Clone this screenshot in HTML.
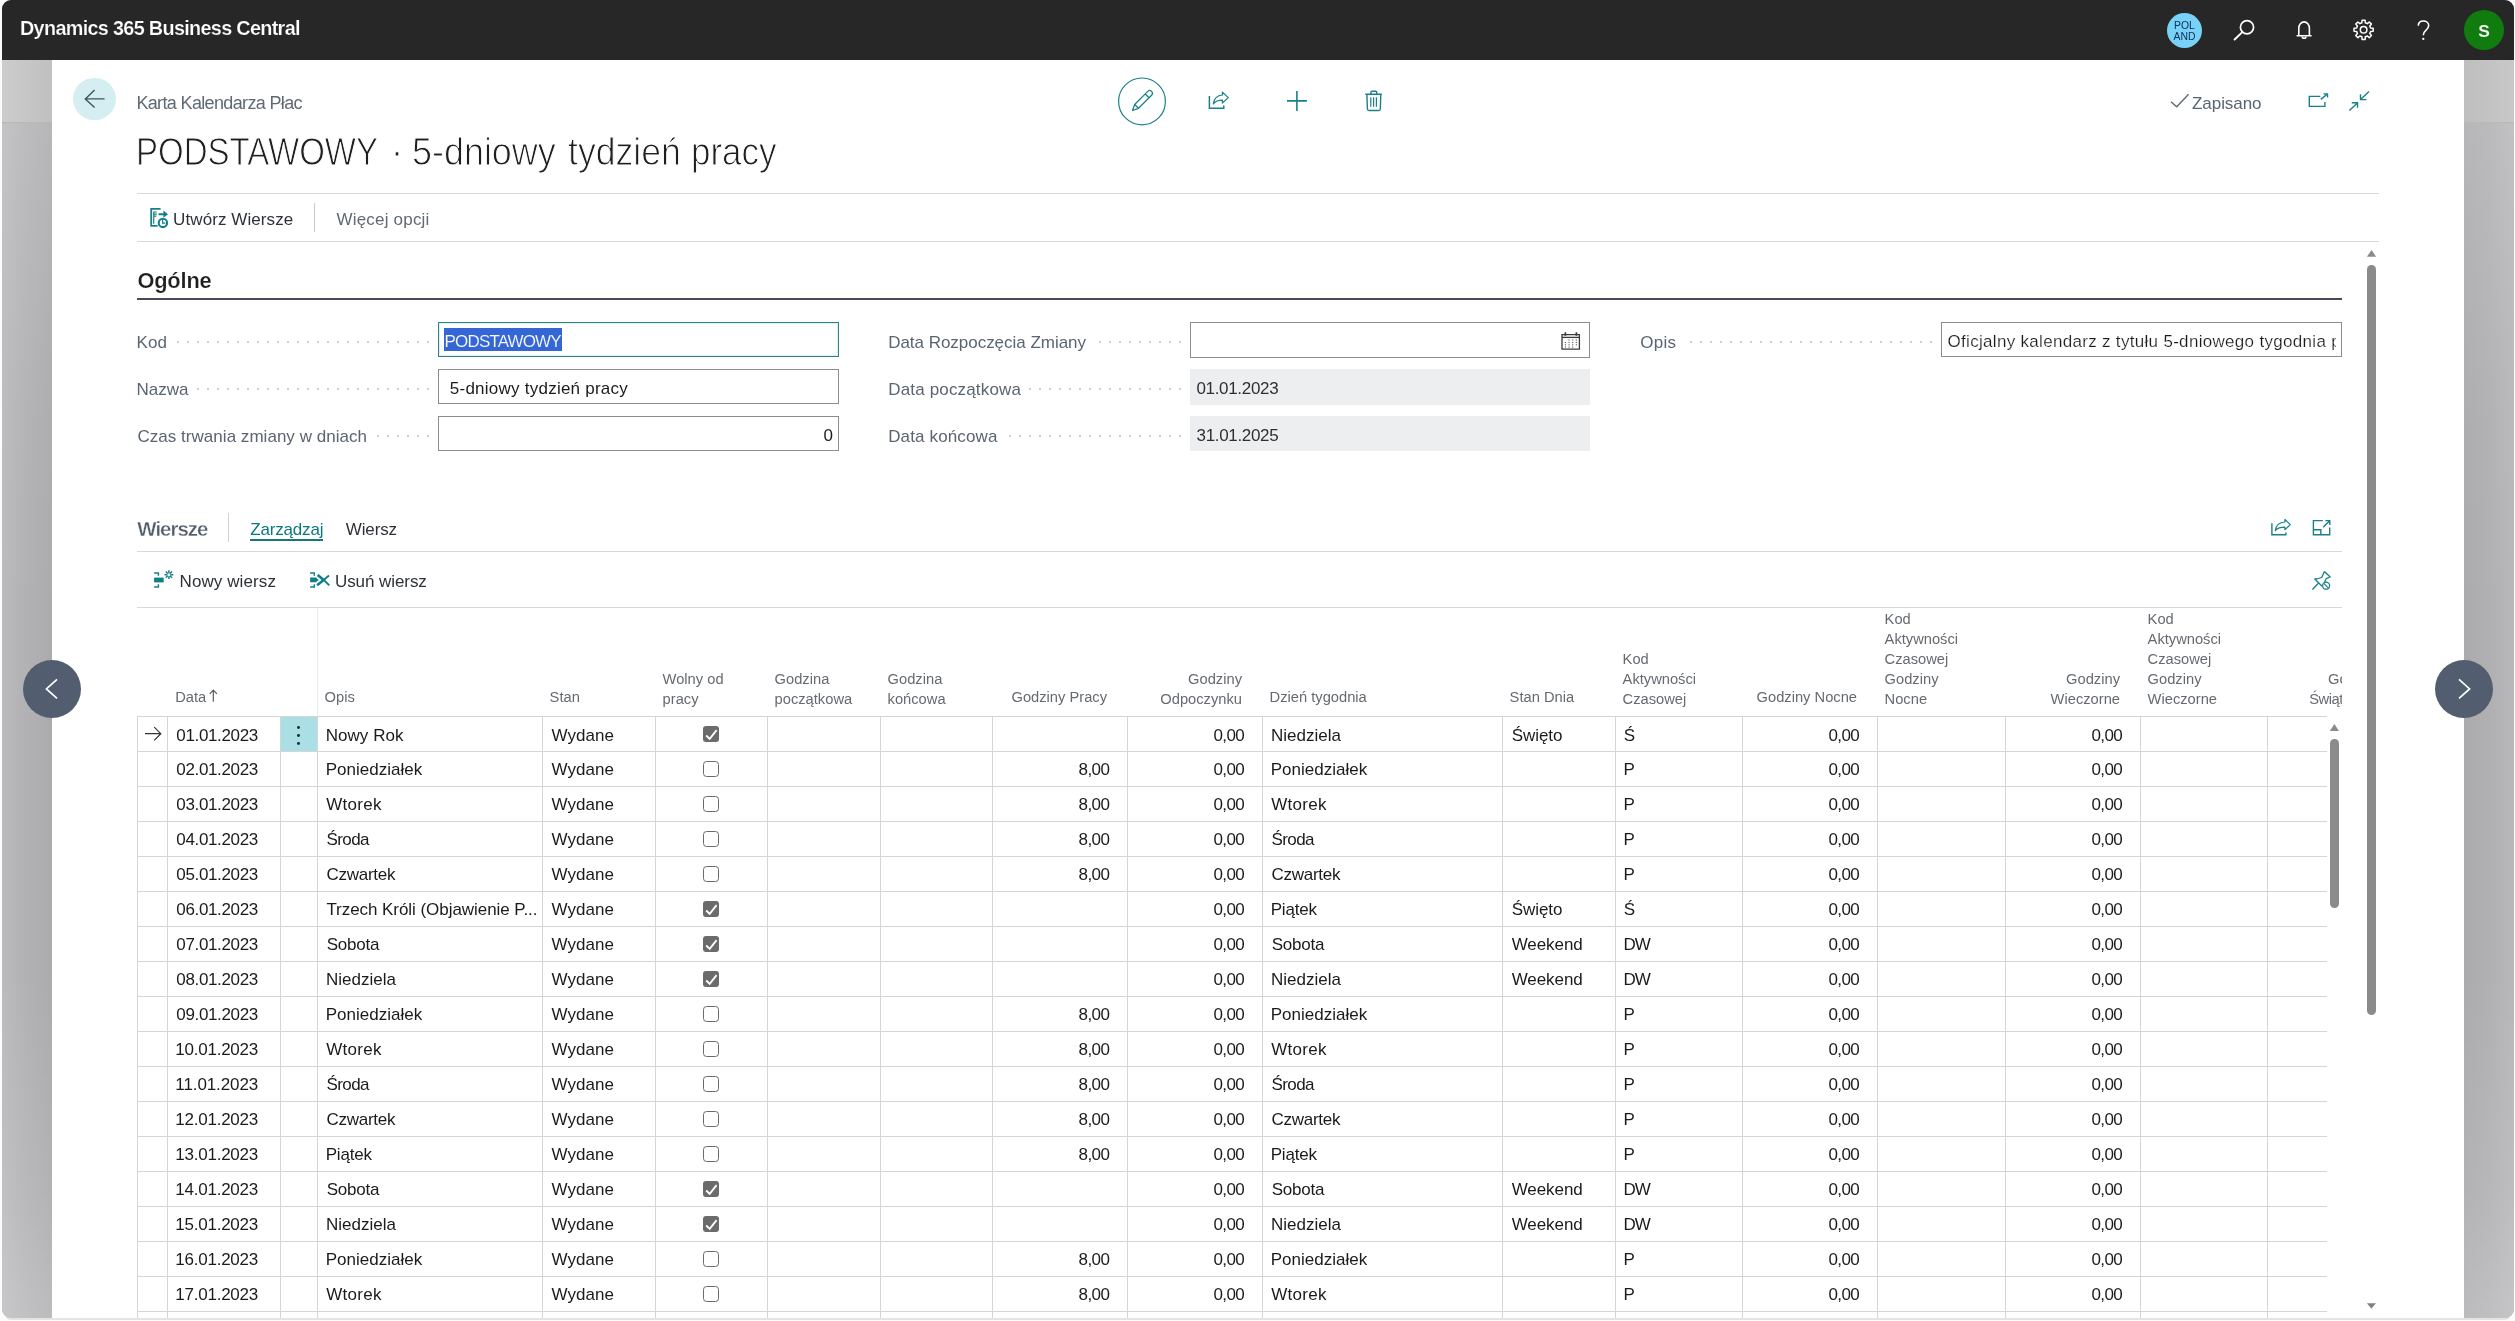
<!DOCTYPE html>
<html lang="pl"><head><meta charset="utf-8"><title>Karta Kalendarza Płac</title>
<style>
html,body{margin:0;padding:0;}
body{width:2515px;height:1321px;overflow:hidden;background:#fcfcfc;font-family:"Liberation Sans",sans-serif;position:relative;}
.t{position:absolute;white-space:nowrap;line-height:1;}
.b{position:absolute;box-sizing:border-box;}
svg{position:absolute;overflow:visible;}
#win{position:absolute;left:2px;top:0;width:2512px;height:1318px;border-radius:9px;overflow:hidden;background:#b4b4b6;}
#abs{will-change:transform;position:absolute;left:-2px;top:0;width:2515px;height:1321px;}
.dots{position:absolute;height:2px;background-image:linear-gradient(90deg,#cbced2 2px,rgba(255,255,255,0) 2px);background-size:10px 2px;background-repeat:repeat-x;}
.hl{position:absolute;height:1px;background:#d8d8d8;}
</style></head><body>
<div class="b" style="left:5px;top:1314px;width:2506px;height:5.5px;background:#e4e4e4;border-radius:0 0 9px 9px;"></div>
<div id="win"><div id="abs">

<div class="b" style="left:2px;top:60px;width:50px;height:1260px;background:linear-gradient(180deg,rgba(255,255,255,.16) 0%,rgba(255,255,255,.12) 8%,rgba(255,255,255,.03) 28%,rgba(255,255,255,0) 45%,rgba(255,255,255,0) 72%,rgba(255,255,255,.09) 90%,rgba(255,255,255,.20) 100%),linear-gradient(90deg,#bbbbbd 0%,#b3b3b5 40%,#ababad 100%);"></div>
<div class="b" style="left:2px;top:60px;width:50px;height:63px;background:linear-gradient(90deg,#cccccd 0%,#c6c6c7 50%,#c0c0c1 100%);border-bottom:1px solid #b8b8ba;"></div>
<div class="b" style="left:2464px;top:60px;width:51px;height:1260px;background:linear-gradient(180deg,rgba(255,255,255,.16) 0%,rgba(255,255,255,.12) 8%,rgba(255,255,255,.03) 28%,rgba(255,255,255,0) 45%,rgba(255,255,255,0) 72%,rgba(255,255,255,.09) 90%,rgba(255,255,255,.20) 100%),linear-gradient(90deg,#ababad 0%,#b1b1b3 55%,#b8b8ba 100%);"></div>
<div class="b" style="left:2464px;top:60px;width:51px;height:63px;background:linear-gradient(90deg,#bebebf 0%,#c3c3c4 50%,#c8c8c9 100%);border-bottom:1px solid #b8b8ba;"></div>
<div class="b" style="left:52px;top:60px;width:2412px;height:1262px;background:#fff;"></div>
<div class="b" style="left:0px;top:0px;width:2515px;height:60px;background:#272727;"></div>
<div class="t" style="top:19.00px;font-size:19.8px;color:#fff;-webkit-text-stroke:0.2px #272727;font-weight:bold;letter-spacing:-0.663px;left:20.00px;">Dynamics 365 Business Central</div>
<div class="b" style="left:2166.7px;top:12.6px;width:35.5px;height:35.5px;background:#78d2f7;border-radius:50%;"></div>
<div class="t" style="top:21.00px;font-size:10.4px;color:#0d2c54;left:0.00px;left:2166.7px;width:35.5px;text-align:center;">POL</div>
<div class="t" style="top:32.00px;font-size:10.4px;color:#0d2c54;left:0.00px;left:2166.7px;width:35.5px;text-align:center;">AND</div>
<div class="b" style="left:2464px;top:10px;width:40px;height:40px;background:#107c10;border-radius:50%;"></div>
<div class="t" style="top:23.00px;font-size:17.4px;color:#fff;-webkit-text-stroke:0.12px #107c10;font-weight:bold;left:0.00px;left:2464px;width:40px;text-align:center;">S</div>
<div class="b" style="left:73.2px;top:77.6px;width:42.6px;height:42.6px;background:#d4eef1;border-radius:50%;"></div>
<div class="t" style="top:94.00px;font-size:18.0px;color:#5f6a75;letter-spacing:-0.645px;left:136.40px;">Karta Kalendarza Płac</div>
<div class="t" style="top:132.00px;font-size:39.2px;color:#1f1f1f;left:136.47px;transform:scaleX(0.8423);transform-origin:0 0;-webkit-text-stroke:1.0px #fff;">PODSTAWOWY</div>
<div class="t" style="top:132.00px;font-size:39.2px;color:#1f1f1f;left:390.60px;transform:scaleX(1.0000);transform-origin:0 0;-webkit-text-stroke:1.0px #fff;">·</div>
<div class="t" style="top:132.00px;font-size:39.2px;color:#1f1f1f;left:411.78px;transform:scaleX(0.9166);transform-origin:0 0;-webkit-text-stroke:1.0px #fff;">5-dniowy</div>
<div class="t" style="top:132.00px;font-size:39.2px;color:#1f1f1f;left:568.10px;transform:scaleX(0.9087);transform-origin:0 0;-webkit-text-stroke:1.0px #fff;">tydzień</div>
<div class="t" style="top:132.00px;font-size:39.2px;color:#1f1f1f;left:690.52px;transform:scaleX(0.8925);transform-origin:0 0;-webkit-text-stroke:1.0px #fff;">pracy</div>
<div class="t" style="top:95.00px;font-size:17.0px;color:#5a6570;letter-spacing:-0.054px;left:2192.00px;">Zapisano</div>
<div class="hl" style="left:137px;top:193px;width:2242px;"></div>
<div class="hl" style="left:137px;top:241px;width:2242px;"></div>
<div class="t" style="top:211.00px;font-size:17.0px;color:#2e3238;letter-spacing:0.088px;left:173.10px;">Utwórz Wiersze</div>
<div class="b" style="left:314px;top:203px;width:1px;height:29px;background:#c9c9c9;"></div>
<div class="t" style="top:211.00px;font-size:17.0px;color:#5f6a75;letter-spacing:0.208px;left:336.40px;">Więcej opcji</div>
<div class="t" style="top:270.00px;font-size:21.8px;color:#1f1f1f;-webkit-text-stroke:0.2px #fff;font-weight:bold;letter-spacing:-0.151px;left:137.40px;">Ogólne</div>
<div class="b" style="left:137px;top:298px;width:2205px;height:2px;background:#474b5c;"></div>
<div class="t" style="top:334.00px;font-size:17.0px;color:#5b6572;letter-spacing:0.103px;left:136.50px;">Kod</div>
<div class="dots" style="left:177px;top:341px;width:252px;"></div>
<div class="t" style="top:381.00px;font-size:17.0px;color:#5b6572;letter-spacing:-0.002px;left:136.50px;">Nazwa</div>
<div class="dots" style="left:197px;top:388px;width:232px;"></div>
<div class="t" style="top:428.00px;font-size:17.0px;color:#5b6572;letter-spacing:0.03px;left:137.50px;">Czas trwania zmiany w dniach</div>
<div class="dots" style="left:377px;top:435px;width:52px;"></div>
<div class="t" style="top:334.00px;font-size:17.0px;color:#5b6572;letter-spacing:-0.028px;left:888.20px;">Data Rozpoczęcia Zmiany</div>
<div class="dots" style="left:1099px;top:341px;width:82px;"></div>
<div class="t" style="top:381.00px;font-size:17.0px;color:#5b6572;letter-spacing:0.168px;left:888.20px;">Data początkowa</div>
<div class="dots" style="left:1029px;top:388px;width:152px;"></div>
<div class="t" style="top:428.00px;font-size:17.0px;color:#5b6572;letter-spacing:0.139px;left:888.20px;">Data końcowa</div>
<div class="dots" style="left:1009px;top:435px;width:172px;"></div>
<div class="t" style="top:334.00px;font-size:17.0px;color:#5b6572;letter-spacing:0.282px;left:1640.20px;">Opis</div>
<div class="dots" style="left:1690px;top:341px;width:242px;"></div>
<div class="b" style="left:438px;top:322px;width:401px;height:35px;border:1.2px solid #2f8286;background:#fff;box-shadow:inset 0 0 0 1px #d8f1f2;"></div>
<div class="b" style="left:444px;top:328px;width:118px;height:23px;background:#3466d6;"></div>
<div class="t" style="top:333.00px;font-size:17.0px;color:#fff;-webkit-text-stroke:0.15px #3466d6;letter-spacing:-0.847px;left:444.60px;">PODSTAWOWY</div>
<div class="b" style="left:438px;top:369px;width:401px;height:35px;border:1px solid #8c8c8c;background:#fff;"></div>
<div class="t" style="top:380.00px;font-size:17.0px;color:#1b1b1b;letter-spacing:0.242px;left:449.80px;">5-dniowy tydzień pracy</div>
<div class="b" style="left:438px;top:416px;width:401px;height:35px;border:1px solid #8c8c8c;background:#fff;"></div>
<div class="t" style="top:427.00px;font-size:17.0px;color:#1b1b1b;right:1682.00px;">0</div>
<div class="b" style="left:1190px;top:322px;width:400px;height:36px;border:1px solid #8c8c8c;background:#fff;"></div>
<div class="b" style="left:1190px;top:369px;width:400px;height:35.5px;background:#eceef0;"></div>
<div class="t" style="top:380.00px;font-size:17.0px;color:#303030;letter-spacing:-0.314px;left:1196.40px;">01.01.2023</div>
<div class="b" style="left:1190px;top:416px;width:400px;height:35px;background:#eceef0;"></div>
<div class="t" style="top:427.00px;font-size:17.0px;color:#303030;letter-spacing:-0.336px;left:1196.60px;">31.01.2025</div>
<div class="b" style="left:1941px;top:322px;width:401px;height:35px;border:1px solid #8c8c8c;background:#fff;"></div>
<div class="b" style="left:1942px;top:323px;width:393.7px;height:33px;overflow:hidden;"><div class="t" style="left:5.50px;top:10.00px;font-size:17px;letter-spacing:0.309px;color:#1b1b1b;-webkit-text-stroke:0.2px #fff;">Oficjalny kalendarz z tytułu 5-dniowego tygodnia pracy</div></div>
<div class="t" style="top:519.00px;font-size:20.4px;color:#535e6d;-webkit-text-stroke:0.33px #fff;font-weight:bold;letter-spacing:-0.974px;left:137.30px;">Wiersze</div>
<div class="b" style="left:228px;top:513px;width:1px;height:29px;background:#d2d2d2;"></div>
<div class="t" style="top:521.00px;font-size:17.0px;color:#0a787f;letter-spacing:-0.183px;left:250.30px;">Zarządzaj</div>
<div class="b" style="left:250px;top:538.5px;width:73px;height:2px;background:#16787e;"></div>
<div class="t" style="top:521.00px;font-size:17.0px;color:#2e3238;letter-spacing:-0.128px;left:345.80px;">Wiersz</div>
<div class="hl" style="left:137px;top:551px;width:2205px;"></div>
<div class="t" style="top:573.00px;font-size:17.0px;color:#2e3238;letter-spacing:0.1px;left:179.50px;">Nowy wiersz</div>
<div class="t" style="top:573.00px;font-size:17.0px;color:#2e3238;letter-spacing:-0.078px;left:335.00px;">Usuń wiersz</div>
<div class="hl" style="left:137px;top:607px;width:2205px;"></div>
<div class="b" style="left:137px;top:608px;width:2205px;height:712px;overflow:hidden;"><div class="b" style="left:-137px;top:-608px;width:2515px;height:1321px;">
<div class="t" style="top:690.00px;font-size:14.7px;color:#666a70;left:175.20px;">Data</div>
<div class="t" style="top:690.00px;font-size:14.7px;color:#666a70;left:324.60px;">Opis</div>
<div class="t" style="top:690.00px;font-size:14.7px;color:#666a70;left:549.60px;">Stan</div>
<div class="t" style="top:672.00px;font-size:14.7px;color:#666a70;left:662.60px;">Wolny od</div>
<div class="t" style="top:692.00px;font-size:14.7px;color:#666a70;left:662.60px;">pracy</div>
<div class="t" style="top:672.00px;font-size:14.7px;color:#666a70;left:774.60px;">Godzina</div>
<div class="t" style="top:692.00px;font-size:14.7px;color:#666a70;left:774.60px;">początkowa</div>
<div class="t" style="top:672.00px;font-size:14.7px;color:#666a70;left:887.60px;">Godzina</div>
<div class="t" style="top:692.00px;font-size:14.7px;color:#666a70;left:887.60px;">końcowa</div>
<div class="t" style="top:690.00px;font-size:14.7px;color:#666a70;right:1408.00px;">Godziny Pracy</div>
<div class="t" style="top:672.00px;font-size:14.7px;color:#666a70;right:1273.00px;">Godziny</div>
<div class="t" style="top:692.00px;font-size:14.7px;color:#666a70;right:1273.00px;">Odpoczynku</div>
<div class="t" style="top:690.00px;font-size:14.7px;color:#666a70;left:1269.60px;">Dzień tygodnia</div>
<div class="t" style="top:690.00px;font-size:14.7px;color:#666a70;left:1509.60px;">Stan Dnia</div>
<div class="t" style="top:652.00px;font-size:14.7px;color:#666a70;left:1622.60px;">Kod</div>
<div class="t" style="top:672.00px;font-size:14.7px;color:#666a70;left:1622.60px;">Aktywności</div>
<div class="t" style="top:692.00px;font-size:14.7px;color:#666a70;left:1622.60px;">Czasowej</div>
<div class="t" style="top:690.00px;font-size:14.7px;color:#666a70;right:658.00px;">Godziny Nocne</div>
<div class="t" style="top:612.00px;font-size:14.7px;color:#666a70;left:1884.60px;">Kod</div>
<div class="t" style="top:632.00px;font-size:14.7px;color:#666a70;left:1884.60px;">Aktywności</div>
<div class="t" style="top:652.00px;font-size:14.7px;color:#666a70;left:1884.60px;">Czasowej</div>
<div class="t" style="top:672.00px;font-size:14.7px;color:#666a70;left:1884.60px;">Godziny</div>
<div class="t" style="top:692.00px;font-size:14.7px;color:#666a70;left:1884.60px;">Nocne</div>
<div class="t" style="top:672.00px;font-size:14.7px;color:#666a70;right:395.00px;">Godziny</div>
<div class="t" style="top:692.00px;font-size:14.7px;color:#666a70;right:395.00px;">Wieczorne</div>
<div class="t" style="top:612.00px;font-size:14.7px;color:#666a70;left:2147.60px;">Kod</div>
<div class="t" style="top:632.00px;font-size:14.7px;color:#666a70;left:2147.60px;">Aktywności</div>
<div class="t" style="top:652.00px;font-size:14.7px;color:#666a70;left:2147.60px;">Czasowej</div>
<div class="t" style="top:672.00px;font-size:14.7px;color:#666a70;left:2147.60px;">Godziny</div>
<div class="t" style="top:692.00px;font-size:14.7px;color:#666a70;left:2147.60px;">Wieczorne</div>
<div class="t" style="top:672.00px;font-size:14.7px;color:#666a70;right:133.10px;">Godziny</div>
<div class="t" style="top:692.00px;font-size:14.7px;color:#666a70;letter-spacing:-0.45px;left:2309.20px;">Świąteczne</div>
<div class="b" style="left:317px;top:608px;width:1px;height:108px;background:#e4ebeb;"></div>
</div></div>
<div class="b" style="left:137px;top:716px;width:2190px;height:605px;overflow:hidden;"><div class="b" style="left:-137px;top:-716px;width:2515px;height:1321px;">
<div class="b" style="left:137px;top:716px;width:2200px;height:1px;background:#d5d5d5;"></div>
<div class="b" style="left:137px;top:751px;width:2200px;height:1px;background:#d5d5d5;"></div>
<div class="b" style="left:137px;top:786px;width:2200px;height:1px;background:#d5d5d5;"></div>
<div class="b" style="left:137px;top:821px;width:2200px;height:1px;background:#d5d5d5;"></div>
<div class="b" style="left:137px;top:856px;width:2200px;height:1px;background:#d5d5d5;"></div>
<div class="b" style="left:137px;top:891px;width:2200px;height:1px;background:#d5d5d5;"></div>
<div class="b" style="left:137px;top:926px;width:2200px;height:1px;background:#d5d5d5;"></div>
<div class="b" style="left:137px;top:961px;width:2200px;height:1px;background:#d5d5d5;"></div>
<div class="b" style="left:137px;top:996px;width:2200px;height:1px;background:#d5d5d5;"></div>
<div class="b" style="left:137px;top:1031px;width:2200px;height:1px;background:#d5d5d5;"></div>
<div class="b" style="left:137px;top:1066px;width:2200px;height:1px;background:#d5d5d5;"></div>
<div class="b" style="left:137px;top:1101px;width:2200px;height:1px;background:#d5d5d5;"></div>
<div class="b" style="left:137px;top:1136px;width:2200px;height:1px;background:#d5d5d5;"></div>
<div class="b" style="left:137px;top:1171px;width:2200px;height:1px;background:#d5d5d5;"></div>
<div class="b" style="left:137px;top:1206px;width:2200px;height:1px;background:#d5d5d5;"></div>
<div class="b" style="left:137px;top:1241px;width:2200px;height:1px;background:#d5d5d5;"></div>
<div class="b" style="left:137px;top:1276px;width:2200px;height:1px;background:#d5d5d5;"></div>
<div class="b" style="left:137px;top:1311px;width:2200px;height:1px;background:#d5d5d5;"></div>
<div class="b" style="left:137px;top:1346px;width:2200px;height:1px;background:#d5d5d5;"></div>
<div class="b" style="left:137px;top:716px;width:1px;height:610px;background:#d5d5d5;"></div>
<div class="b" style="left:167px;top:716px;width:1px;height:610px;background:#d5d5d5;"></div>
<div class="b" style="left:280px;top:716px;width:1px;height:610px;background:#d5d5d5;"></div>
<div class="b" style="left:317px;top:716px;width:1px;height:610px;background:#d5d5d5;"></div>
<div class="b" style="left:542px;top:716px;width:1px;height:610px;background:#d5d5d5;"></div>
<div class="b" style="left:655px;top:716px;width:1px;height:610px;background:#d5d5d5;"></div>
<div class="b" style="left:767px;top:716px;width:1px;height:610px;background:#d5d5d5;"></div>
<div class="b" style="left:880px;top:716px;width:1px;height:610px;background:#d5d5d5;"></div>
<div class="b" style="left:992px;top:716px;width:1px;height:610px;background:#d5d5d5;"></div>
<div class="b" style="left:1127px;top:716px;width:1px;height:610px;background:#d5d5d5;"></div>
<div class="b" style="left:1262px;top:716px;width:1px;height:610px;background:#d5d5d5;"></div>
<div class="b" style="left:1502px;top:716px;width:1px;height:610px;background:#d5d5d5;"></div>
<div class="b" style="left:1615px;top:716px;width:1px;height:610px;background:#d5d5d5;"></div>
<div class="b" style="left:1742px;top:716px;width:1px;height:610px;background:#d5d5d5;"></div>
<div class="b" style="left:1877px;top:716px;width:1px;height:610px;background:#d5d5d5;"></div>
<div class="b" style="left:2005px;top:716px;width:1px;height:610px;background:#d5d5d5;"></div>
<div class="b" style="left:2140px;top:716px;width:1px;height:610px;background:#d5d5d5;"></div>
<div class="b" style="left:2267px;top:716px;width:1px;height:610px;background:#d5d5d5;"></div>
<div class="t" style="top:727.00px;font-size:17.0px;color:#1b1b1b;letter-spacing:-0.353px;left:176.35px;">01.01.2023</div>
<div class="t" style="top:727.00px;font-size:17.0px;color:#1b1b1b;letter-spacing:0.048px;left:325.70px;">Nowy Rok</div>
<div class="t" style="top:727.00px;font-size:17.0px;color:#1b1b1b;letter-spacing:0.048px;left:551.60px;">Wydane</div>
<div class="b" style="left:703px;top:726px;width:16px;height:16px;background:#6b6b6b;border-radius:3px;"></div>
<div class="t" style="top:727.00px;font-size:17.0px;color:#1b1b1b;letter-spacing:-0.644px;left:1213.50px;">0,00</div>
<div class="t" style="top:727.00px;font-size:17.0px;color:#1b1b1b;letter-spacing:0.004px;left:1271.00px;">Niedziela</div>
<div class="t" style="top:727.00px;font-size:17.0px;color:#1b1b1b;letter-spacing:-0.054px;left:1511.70px;">Święto</div>
<div class="t" style="top:727.00px;font-size:17.0px;color:#1b1b1b;left:1623.80px;">Ś</div>
<div class="t" style="top:727.00px;font-size:17.0px;color:#1b1b1b;letter-spacing:-0.644px;left:1828.50px;">0,00</div>
<div class="t" style="top:727.00px;font-size:17.0px;color:#1b1b1b;letter-spacing:-0.644px;left:2091.50px;">0,00</div>
<div class="t" style="top:761.00px;font-size:17.0px;color:#1b1b1b;letter-spacing:-0.353px;left:176.35px;">02.01.2023</div>
<div class="t" style="top:761.00px;font-size:17.0px;color:#1b1b1b;letter-spacing:0.009px;left:325.70px;">Poniedziałek</div>
<div class="t" style="top:761.00px;font-size:17.0px;color:#1b1b1b;letter-spacing:0.048px;left:551.60px;">Wydane</div>
<div class="b" style="left:703px;top:761px;width:16px;height:16px;border:1.5px solid #6a6a6a;border-radius:3.5px;background:#fff;"></div>
<div class="t" style="top:761.00px;font-size:17.0px;color:#1b1b1b;letter-spacing:-0.544px;left:1078.50px;">8,00</div>
<div class="t" style="top:761.00px;font-size:17.0px;color:#1b1b1b;letter-spacing:-0.644px;left:1213.50px;">0,00</div>
<div class="t" style="top:761.00px;font-size:17.0px;color:#1b1b1b;letter-spacing:0.009px;left:1270.70px;">Poniedziałek</div>
<div class="t" style="top:761.00px;font-size:17.0px;color:#1b1b1b;left:1623.60px;">P</div>
<div class="t" style="top:761.00px;font-size:17.0px;color:#1b1b1b;letter-spacing:-0.644px;left:1828.50px;">0,00</div>
<div class="t" style="top:761.00px;font-size:17.0px;color:#1b1b1b;letter-spacing:-0.644px;left:2091.50px;">0,00</div>
<div class="t" style="top:796.00px;font-size:17.0px;color:#1b1b1b;letter-spacing:-0.353px;left:176.35px;">03.01.2023</div>
<div class="t" style="top:796.00px;font-size:17.0px;color:#1b1b1b;letter-spacing:0.312px;left:326.20px;">Wtorek</div>
<div class="t" style="top:796.00px;font-size:17.0px;color:#1b1b1b;letter-spacing:0.048px;left:551.60px;">Wydane</div>
<div class="b" style="left:703px;top:796px;width:16px;height:16px;border:1.5px solid #6a6a6a;border-radius:3.5px;background:#fff;"></div>
<div class="t" style="top:796.00px;font-size:17.0px;color:#1b1b1b;letter-spacing:-0.544px;left:1078.50px;">8,00</div>
<div class="t" style="top:796.00px;font-size:17.0px;color:#1b1b1b;letter-spacing:-0.644px;left:1213.50px;">0,00</div>
<div class="t" style="top:796.00px;font-size:17.0px;color:#1b1b1b;letter-spacing:0.312px;left:1271.20px;">Wtorek</div>
<div class="t" style="top:796.00px;font-size:17.0px;color:#1b1b1b;left:1623.60px;">P</div>
<div class="t" style="top:796.00px;font-size:17.0px;color:#1b1b1b;letter-spacing:-0.644px;left:1828.50px;">0,00</div>
<div class="t" style="top:796.00px;font-size:17.0px;color:#1b1b1b;letter-spacing:-0.644px;left:2091.50px;">0,00</div>
<div class="t" style="top:831.00px;font-size:17.0px;color:#1b1b1b;letter-spacing:-0.353px;left:176.35px;">04.01.2023</div>
<div class="t" style="top:831.00px;font-size:17.0px;color:#1b1b1b;letter-spacing:-0.577px;left:326.50px;">Środa</div>
<div class="t" style="top:831.00px;font-size:17.0px;color:#1b1b1b;letter-spacing:0.048px;left:551.60px;">Wydane</div>
<div class="b" style="left:703px;top:831px;width:16px;height:16px;border:1.5px solid #6a6a6a;border-radius:3.5px;background:#fff;"></div>
<div class="t" style="top:831.00px;font-size:17.0px;color:#1b1b1b;letter-spacing:-0.544px;left:1078.50px;">8,00</div>
<div class="t" style="top:831.00px;font-size:17.0px;color:#1b1b1b;letter-spacing:-0.644px;left:1213.50px;">0,00</div>
<div class="t" style="top:831.00px;font-size:17.0px;color:#1b1b1b;letter-spacing:-0.577px;left:1271.50px;">Środa</div>
<div class="t" style="top:831.00px;font-size:17.0px;color:#1b1b1b;left:1623.60px;">P</div>
<div class="t" style="top:831.00px;font-size:17.0px;color:#1b1b1b;letter-spacing:-0.644px;left:1828.50px;">0,00</div>
<div class="t" style="top:831.00px;font-size:17.0px;color:#1b1b1b;letter-spacing:-0.644px;left:2091.50px;">0,00</div>
<div class="t" style="top:866.00px;font-size:17.0px;color:#1b1b1b;letter-spacing:-0.353px;left:176.35px;">05.01.2023</div>
<div class="t" style="top:866.00px;font-size:17.0px;color:#1b1b1b;letter-spacing:-0.25px;left:326.40px;">Czwartek</div>
<div class="t" style="top:866.00px;font-size:17.0px;color:#1b1b1b;letter-spacing:0.048px;left:551.60px;">Wydane</div>
<div class="b" style="left:703px;top:866px;width:16px;height:16px;border:1.5px solid #6a6a6a;border-radius:3.5px;background:#fff;"></div>
<div class="t" style="top:866.00px;font-size:17.0px;color:#1b1b1b;letter-spacing:-0.544px;left:1078.50px;">8,00</div>
<div class="t" style="top:866.00px;font-size:17.0px;color:#1b1b1b;letter-spacing:-0.644px;left:1213.50px;">0,00</div>
<div class="t" style="top:866.00px;font-size:17.0px;color:#1b1b1b;letter-spacing:-0.25px;left:1271.40px;">Czwartek</div>
<div class="t" style="top:866.00px;font-size:17.0px;color:#1b1b1b;left:1623.60px;">P</div>
<div class="t" style="top:866.00px;font-size:17.0px;color:#1b1b1b;letter-spacing:-0.644px;left:1828.50px;">0,00</div>
<div class="t" style="top:866.00px;font-size:17.0px;color:#1b1b1b;letter-spacing:-0.644px;left:2091.50px;">0,00</div>
<div class="t" style="top:901.00px;font-size:17.0px;color:#1b1b1b;letter-spacing:-0.353px;left:176.35px;">06.01.2023</div>
<div class="t" style="top:901.00px;font-size:17.0px;color:#1b1b1b;letter-spacing:-0.052px;left:326.40px;">Trzech Króli (Objawienie P...</div>
<div class="t" style="top:901.00px;font-size:17.0px;color:#1b1b1b;letter-spacing:0.048px;left:551.60px;">Wydane</div>
<div class="b" style="left:703px;top:901px;width:16px;height:16px;background:#6b6b6b;border-radius:3px;"></div>
<div class="t" style="top:901.00px;font-size:17.0px;color:#1b1b1b;letter-spacing:-0.644px;left:1213.50px;">0,00</div>
<div class="t" style="top:901.00px;font-size:17.0px;color:#1b1b1b;letter-spacing:-0.17px;left:1270.70px;">Piątek</div>
<div class="t" style="top:901.00px;font-size:17.0px;color:#1b1b1b;letter-spacing:-0.054px;left:1511.70px;">Święto</div>
<div class="t" style="top:901.00px;font-size:17.0px;color:#1b1b1b;left:1623.80px;">Ś</div>
<div class="t" style="top:901.00px;font-size:17.0px;color:#1b1b1b;letter-spacing:-0.644px;left:1828.50px;">0,00</div>
<div class="t" style="top:901.00px;font-size:17.0px;color:#1b1b1b;letter-spacing:-0.644px;left:2091.50px;">0,00</div>
<div class="t" style="top:936.00px;font-size:17.0px;color:#1b1b1b;letter-spacing:-0.353px;left:176.35px;">07.01.2023</div>
<div class="t" style="top:936.00px;font-size:17.0px;color:#1b1b1b;letter-spacing:-0.205px;left:326.70px;">Sobota</div>
<div class="t" style="top:936.00px;font-size:17.0px;color:#1b1b1b;letter-spacing:0.048px;left:551.60px;">Wydane</div>
<div class="b" style="left:703px;top:936px;width:16px;height:16px;background:#6b6b6b;border-radius:3px;"></div>
<div class="t" style="top:936.00px;font-size:17.0px;color:#1b1b1b;letter-spacing:-0.644px;left:1213.50px;">0,00</div>
<div class="t" style="top:936.00px;font-size:17.0px;color:#1b1b1b;letter-spacing:-0.205px;left:1271.70px;">Sobota</div>
<div class="t" style="top:936.00px;font-size:17.0px;color:#1b1b1b;letter-spacing:-0.076px;left:1511.70px;">Weekend</div>
<div class="t" style="top:936.00px;font-size:17.0px;color:#1b1b1b;letter-spacing:-1.077px;left:1623.60px;">DW</div>
<div class="t" style="top:936.00px;font-size:17.0px;color:#1b1b1b;letter-spacing:-0.644px;left:1828.50px;">0,00</div>
<div class="t" style="top:936.00px;font-size:17.0px;color:#1b1b1b;letter-spacing:-0.644px;left:2091.50px;">0,00</div>
<div class="t" style="top:971.00px;font-size:17.0px;color:#1b1b1b;letter-spacing:-0.353px;left:176.35px;">08.01.2023</div>
<div class="t" style="top:971.00px;font-size:17.0px;color:#1b1b1b;letter-spacing:0.004px;left:326.00px;">Niedziela</div>
<div class="t" style="top:971.00px;font-size:17.0px;color:#1b1b1b;letter-spacing:0.048px;left:551.60px;">Wydane</div>
<div class="b" style="left:703px;top:971px;width:16px;height:16px;background:#6b6b6b;border-radius:3px;"></div>
<div class="t" style="top:971.00px;font-size:17.0px;color:#1b1b1b;letter-spacing:-0.644px;left:1213.50px;">0,00</div>
<div class="t" style="top:971.00px;font-size:17.0px;color:#1b1b1b;letter-spacing:0.004px;left:1271.00px;">Niedziela</div>
<div class="t" style="top:971.00px;font-size:17.0px;color:#1b1b1b;letter-spacing:-0.076px;left:1511.70px;">Weekend</div>
<div class="t" style="top:971.00px;font-size:17.0px;color:#1b1b1b;letter-spacing:-1.077px;left:1623.60px;">DW</div>
<div class="t" style="top:971.00px;font-size:17.0px;color:#1b1b1b;letter-spacing:-0.644px;left:1828.50px;">0,00</div>
<div class="t" style="top:971.00px;font-size:17.0px;color:#1b1b1b;letter-spacing:-0.644px;left:2091.50px;">0,00</div>
<div class="t" style="top:1006.00px;font-size:17.0px;color:#1b1b1b;letter-spacing:-0.353px;left:176.35px;">09.01.2023</div>
<div class="t" style="top:1006.00px;font-size:17.0px;color:#1b1b1b;letter-spacing:0.009px;left:325.70px;">Poniedziałek</div>
<div class="t" style="top:1006.00px;font-size:17.0px;color:#1b1b1b;letter-spacing:0.048px;left:551.60px;">Wydane</div>
<div class="b" style="left:703px;top:1006px;width:16px;height:16px;border:1.5px solid #6a6a6a;border-radius:3.5px;background:#fff;"></div>
<div class="t" style="top:1006.00px;font-size:17.0px;color:#1b1b1b;letter-spacing:-0.544px;left:1078.50px;">8,00</div>
<div class="t" style="top:1006.00px;font-size:17.0px;color:#1b1b1b;letter-spacing:-0.644px;left:1213.50px;">0,00</div>
<div class="t" style="top:1006.00px;font-size:17.0px;color:#1b1b1b;letter-spacing:0.009px;left:1270.70px;">Poniedziałek</div>
<div class="t" style="top:1006.00px;font-size:17.0px;color:#1b1b1b;left:1623.60px;">P</div>
<div class="t" style="top:1006.00px;font-size:17.0px;color:#1b1b1b;letter-spacing:-0.644px;left:1828.50px;">0,00</div>
<div class="t" style="top:1006.00px;font-size:17.0px;color:#1b1b1b;letter-spacing:-0.644px;left:2091.50px;">0,00</div>
<div class="t" style="top:1041.00px;font-size:17.0px;color:#1b1b1b;letter-spacing:-0.242px;left:175.35px;">10.01.2023</div>
<div class="t" style="top:1041.00px;font-size:17.0px;color:#1b1b1b;letter-spacing:0.312px;left:326.20px;">Wtorek</div>
<div class="t" style="top:1041.00px;font-size:17.0px;color:#1b1b1b;letter-spacing:0.048px;left:551.60px;">Wydane</div>
<div class="b" style="left:703px;top:1041px;width:16px;height:16px;border:1.5px solid #6a6a6a;border-radius:3.5px;background:#fff;"></div>
<div class="t" style="top:1041.00px;font-size:17.0px;color:#1b1b1b;letter-spacing:-0.544px;left:1078.50px;">8,00</div>
<div class="t" style="top:1041.00px;font-size:17.0px;color:#1b1b1b;letter-spacing:-0.644px;left:1213.50px;">0,00</div>
<div class="t" style="top:1041.00px;font-size:17.0px;color:#1b1b1b;letter-spacing:0.312px;left:1271.20px;">Wtorek</div>
<div class="t" style="top:1041.00px;font-size:17.0px;color:#1b1b1b;left:1623.60px;">P</div>
<div class="t" style="top:1041.00px;font-size:17.0px;color:#1b1b1b;letter-spacing:-0.644px;left:1828.50px;">0,00</div>
<div class="t" style="top:1041.00px;font-size:17.0px;color:#1b1b1b;letter-spacing:-0.644px;left:2091.50px;">0,00</div>
<div class="t" style="top:1076.00px;font-size:17.0px;color:#1b1b1b;letter-spacing:-0.102px;left:175.35px;">11.01.2023</div>
<div class="t" style="top:1076.00px;font-size:17.0px;color:#1b1b1b;letter-spacing:-0.577px;left:326.50px;">Środa</div>
<div class="t" style="top:1076.00px;font-size:17.0px;color:#1b1b1b;letter-spacing:0.048px;left:551.60px;">Wydane</div>
<div class="b" style="left:703px;top:1076px;width:16px;height:16px;border:1.5px solid #6a6a6a;border-radius:3.5px;background:#fff;"></div>
<div class="t" style="top:1076.00px;font-size:17.0px;color:#1b1b1b;letter-spacing:-0.544px;left:1078.50px;">8,00</div>
<div class="t" style="top:1076.00px;font-size:17.0px;color:#1b1b1b;letter-spacing:-0.644px;left:1213.50px;">0,00</div>
<div class="t" style="top:1076.00px;font-size:17.0px;color:#1b1b1b;letter-spacing:-0.577px;left:1271.50px;">Środa</div>
<div class="t" style="top:1076.00px;font-size:17.0px;color:#1b1b1b;left:1623.60px;">P</div>
<div class="t" style="top:1076.00px;font-size:17.0px;color:#1b1b1b;letter-spacing:-0.644px;left:1828.50px;">0,00</div>
<div class="t" style="top:1076.00px;font-size:17.0px;color:#1b1b1b;letter-spacing:-0.644px;left:2091.50px;">0,00</div>
<div class="t" style="top:1111.00px;font-size:17.0px;color:#1b1b1b;letter-spacing:-0.242px;left:175.35px;">12.01.2023</div>
<div class="t" style="top:1111.00px;font-size:17.0px;color:#1b1b1b;letter-spacing:-0.25px;left:326.40px;">Czwartek</div>
<div class="t" style="top:1111.00px;font-size:17.0px;color:#1b1b1b;letter-spacing:0.048px;left:551.60px;">Wydane</div>
<div class="b" style="left:703px;top:1111px;width:16px;height:16px;border:1.5px solid #6a6a6a;border-radius:3.5px;background:#fff;"></div>
<div class="t" style="top:1111.00px;font-size:17.0px;color:#1b1b1b;letter-spacing:-0.544px;left:1078.50px;">8,00</div>
<div class="t" style="top:1111.00px;font-size:17.0px;color:#1b1b1b;letter-spacing:-0.644px;left:1213.50px;">0,00</div>
<div class="t" style="top:1111.00px;font-size:17.0px;color:#1b1b1b;letter-spacing:-0.25px;left:1271.40px;">Czwartek</div>
<div class="t" style="top:1111.00px;font-size:17.0px;color:#1b1b1b;left:1623.60px;">P</div>
<div class="t" style="top:1111.00px;font-size:17.0px;color:#1b1b1b;letter-spacing:-0.644px;left:1828.50px;">0,00</div>
<div class="t" style="top:1111.00px;font-size:17.0px;color:#1b1b1b;letter-spacing:-0.644px;left:2091.50px;">0,00</div>
<div class="t" style="top:1146.00px;font-size:17.0px;color:#1b1b1b;letter-spacing:-0.242px;left:175.35px;">13.01.2023</div>
<div class="t" style="top:1146.00px;font-size:17.0px;color:#1b1b1b;letter-spacing:-0.17px;left:325.70px;">Piątek</div>
<div class="t" style="top:1146.00px;font-size:17.0px;color:#1b1b1b;letter-spacing:0.048px;left:551.60px;">Wydane</div>
<div class="b" style="left:703px;top:1146px;width:16px;height:16px;border:1.5px solid #6a6a6a;border-radius:3.5px;background:#fff;"></div>
<div class="t" style="top:1146.00px;font-size:17.0px;color:#1b1b1b;letter-spacing:-0.544px;left:1078.50px;">8,00</div>
<div class="t" style="top:1146.00px;font-size:17.0px;color:#1b1b1b;letter-spacing:-0.644px;left:1213.50px;">0,00</div>
<div class="t" style="top:1146.00px;font-size:17.0px;color:#1b1b1b;letter-spacing:-0.17px;left:1270.70px;">Piątek</div>
<div class="t" style="top:1146.00px;font-size:17.0px;color:#1b1b1b;left:1623.60px;">P</div>
<div class="t" style="top:1146.00px;font-size:17.0px;color:#1b1b1b;letter-spacing:-0.644px;left:1828.50px;">0,00</div>
<div class="t" style="top:1146.00px;font-size:17.0px;color:#1b1b1b;letter-spacing:-0.644px;left:2091.50px;">0,00</div>
<div class="t" style="top:1181.00px;font-size:17.0px;color:#1b1b1b;letter-spacing:-0.242px;left:175.35px;">14.01.2023</div>
<div class="t" style="top:1181.00px;font-size:17.0px;color:#1b1b1b;letter-spacing:-0.205px;left:326.70px;">Sobota</div>
<div class="t" style="top:1181.00px;font-size:17.0px;color:#1b1b1b;letter-spacing:0.048px;left:551.60px;">Wydane</div>
<div class="b" style="left:703px;top:1181px;width:16px;height:16px;background:#6b6b6b;border-radius:3px;"></div>
<div class="t" style="top:1181.00px;font-size:17.0px;color:#1b1b1b;letter-spacing:-0.644px;left:1213.50px;">0,00</div>
<div class="t" style="top:1181.00px;font-size:17.0px;color:#1b1b1b;letter-spacing:-0.205px;left:1271.70px;">Sobota</div>
<div class="t" style="top:1181.00px;font-size:17.0px;color:#1b1b1b;letter-spacing:-0.076px;left:1511.70px;">Weekend</div>
<div class="t" style="top:1181.00px;font-size:17.0px;color:#1b1b1b;letter-spacing:-1.077px;left:1623.60px;">DW</div>
<div class="t" style="top:1181.00px;font-size:17.0px;color:#1b1b1b;letter-spacing:-0.644px;left:1828.50px;">0,00</div>
<div class="t" style="top:1181.00px;font-size:17.0px;color:#1b1b1b;letter-spacing:-0.644px;left:2091.50px;">0,00</div>
<div class="t" style="top:1216.00px;font-size:17.0px;color:#1b1b1b;letter-spacing:-0.242px;left:175.35px;">15.01.2023</div>
<div class="t" style="top:1216.00px;font-size:17.0px;color:#1b1b1b;letter-spacing:0.004px;left:326.00px;">Niedziela</div>
<div class="t" style="top:1216.00px;font-size:17.0px;color:#1b1b1b;letter-spacing:0.048px;left:551.60px;">Wydane</div>
<div class="b" style="left:703px;top:1216px;width:16px;height:16px;background:#6b6b6b;border-radius:3px;"></div>
<div class="t" style="top:1216.00px;font-size:17.0px;color:#1b1b1b;letter-spacing:-0.644px;left:1213.50px;">0,00</div>
<div class="t" style="top:1216.00px;font-size:17.0px;color:#1b1b1b;letter-spacing:0.004px;left:1271.00px;">Niedziela</div>
<div class="t" style="top:1216.00px;font-size:17.0px;color:#1b1b1b;letter-spacing:-0.076px;left:1511.70px;">Weekend</div>
<div class="t" style="top:1216.00px;font-size:17.0px;color:#1b1b1b;letter-spacing:-1.077px;left:1623.60px;">DW</div>
<div class="t" style="top:1216.00px;font-size:17.0px;color:#1b1b1b;letter-spacing:-0.644px;left:1828.50px;">0,00</div>
<div class="t" style="top:1216.00px;font-size:17.0px;color:#1b1b1b;letter-spacing:-0.644px;left:2091.50px;">0,00</div>
<div class="t" style="top:1251.00px;font-size:17.0px;color:#1b1b1b;letter-spacing:-0.242px;left:175.35px;">16.01.2023</div>
<div class="t" style="top:1251.00px;font-size:17.0px;color:#1b1b1b;letter-spacing:0.009px;left:325.70px;">Poniedziałek</div>
<div class="t" style="top:1251.00px;font-size:17.0px;color:#1b1b1b;letter-spacing:0.048px;left:551.60px;">Wydane</div>
<div class="b" style="left:703px;top:1251px;width:16px;height:16px;border:1.5px solid #6a6a6a;border-radius:3.5px;background:#fff;"></div>
<div class="t" style="top:1251.00px;font-size:17.0px;color:#1b1b1b;letter-spacing:-0.544px;left:1078.50px;">8,00</div>
<div class="t" style="top:1251.00px;font-size:17.0px;color:#1b1b1b;letter-spacing:-0.644px;left:1213.50px;">0,00</div>
<div class="t" style="top:1251.00px;font-size:17.0px;color:#1b1b1b;letter-spacing:0.009px;left:1270.70px;">Poniedziałek</div>
<div class="t" style="top:1251.00px;font-size:17.0px;color:#1b1b1b;left:1623.60px;">P</div>
<div class="t" style="top:1251.00px;font-size:17.0px;color:#1b1b1b;letter-spacing:-0.644px;left:1828.50px;">0,00</div>
<div class="t" style="top:1251.00px;font-size:17.0px;color:#1b1b1b;letter-spacing:-0.644px;left:2091.50px;">0,00</div>
<div class="t" style="top:1286.00px;font-size:17.0px;color:#1b1b1b;letter-spacing:-0.242px;left:175.35px;">17.01.2023</div>
<div class="t" style="top:1286.00px;font-size:17.0px;color:#1b1b1b;letter-spacing:0.312px;left:326.20px;">Wtorek</div>
<div class="t" style="top:1286.00px;font-size:17.0px;color:#1b1b1b;letter-spacing:0.048px;left:551.60px;">Wydane</div>
<div class="b" style="left:703px;top:1286px;width:16px;height:16px;border:1.5px solid #6a6a6a;border-radius:3.5px;background:#fff;"></div>
<div class="t" style="top:1286.00px;font-size:17.0px;color:#1b1b1b;letter-spacing:-0.544px;left:1078.50px;">8,00</div>
<div class="t" style="top:1286.00px;font-size:17.0px;color:#1b1b1b;letter-spacing:-0.644px;left:1213.50px;">0,00</div>
<div class="t" style="top:1286.00px;font-size:17.0px;color:#1b1b1b;letter-spacing:0.312px;left:1271.20px;">Wtorek</div>
<div class="t" style="top:1286.00px;font-size:17.0px;color:#1b1b1b;left:1623.60px;">P</div>
<div class="t" style="top:1286.00px;font-size:17.0px;color:#1b1b1b;letter-spacing:-0.644px;left:1828.50px;">0,00</div>
<div class="t" style="top:1286.00px;font-size:17.0px;color:#1b1b1b;letter-spacing:-0.644px;left:2091.50px;">0,00</div>
<div class="b" style="left:281px;top:717px;width:36px;height:34px;background:#a9dfe5;"></div>
<div class="b" style="left:297.4px;top:726.4px;width:2.8px;height:2.8px;background:#1f2d33;border-radius:50%;"></div>
<div class="b" style="left:297.4px;top:734.3000000000001px;width:2.8px;height:2.8px;background:#1f2d33;border-radius:50%;"></div>
<div class="b" style="left:297.4px;top:742.2px;width:2.8px;height:2.8px;background:#1f2d33;border-radius:50%;"></div>
</div></div>
<div class="b" style="left:2330px;top:739px;width:8.8px;height:168.5px;background:#8b8b8b;border-radius:4.4px;"></div>
<div class="b" style="left:2367px;top:265px;width:9px;height:749.6px;background:#8b8b8b;border-radius:4.5px;"></div>
<div class="b" style="left:23px;top:660px;width:58px;height:58px;background:#525d70;border-radius:50%;"></div>
<div class="b" style="left:2435px;top:660px;width:58px;height:58px;background:#525d70;border-radius:50%;"></div>
<svg style="left:0;top:0;" width="2515" height="1321" viewBox="0 0 2515 1321" fill="none"><circle cx="2247" cy="27.3" r="6.6" stroke="#ffffff" stroke-width="1.7" fill="none"/><path d="M2242.3 32.1L2234.6 39.5" stroke="#ffffff" stroke-width="1.9" fill="none" stroke-linecap="round"/><path d="M2296.6 35.8H2311.6M2298.8 35.8V28.2A5.3 6.4 0 0 1 2309.4 28.2V35.8" stroke="#ffffff" stroke-width="1.6" fill="none" /><path d="M2302.2 36.4A1.9 1.9 0 0 0 2306 36.4" stroke="#ffffff" stroke-width="1.5" fill="none" /><path d="M2361.89 22.81L2362.05 20.22L2365.15 20.22L2365.31 22.81L2367.34 23.64L2369.28 21.94L2371.46 24.12L2369.76 26.06L2370.59 28.09L2373.18 28.25L2373.18 31.35L2370.59 31.51L2369.76 33.54L2371.46 35.48L2369.28 37.66L2367.34 35.96L2365.31 36.79L2365.15 39.38L2362.05 39.38L2361.89 36.79L2359.86 35.96L2357.92 37.66L2355.74 35.48L2357.44 33.54L2356.61 31.51L2354.02 31.35L2354.02 28.25L2356.61 28.09L2357.44 26.06L2355.74 24.12L2357.92 21.94L2359.86 23.64Z" stroke="#ffffff" stroke-width="1.5" fill="none" stroke-linejoin="round"/><circle cx="2363.6" cy="29.8" r="3.3" stroke="#ffffff" stroke-width="1.5" fill="none"/><path d="M2418.3 25.7C2418.3 22.7 2420.6 21 2423.4 21C2426.4 21 2428.7 22.9 2428.7 25.6C2428.7 28 2427.2 29.2 2425.8 30.4C2424.3 31.7 2423.3 32.6 2423.3 35.2" stroke="#ffffff" stroke-width="1.6" fill="none" /><circle cx="2423.3" cy="38.9" r="1.15" fill="#ffffff"/><path d="M104.6 98.9H85.4M94.6 90.1L85.3 98.9L94.6 107.6" stroke="#3b5661" stroke-width="1.4" fill="none" /><circle cx="1142" cy="101.4" r="23.4" stroke="#1a8088" stroke-width="1.2" fill="none"/><path d="M1132.50 110.50L1138.51 108.31L1151.61 95.21A2.7 2.7 0 0 0 1147.79 91.39L1134.69 104.49ZM1138.51 108.31L1134.69 104.49M1149.06 97.75L1145.25 93.94" stroke="#1a8088" stroke-width="1.25" fill="none" stroke-linejoin="round"/><path d="M1209.4 96V108.2H1223.8V105.6" stroke="#1a8088" stroke-width="1.5" fill="none" /><path d="M1222.4 92.2L1228.3 97.6L1222.4 103V100.2C1218.4 100.2 1215.4 101.4 1213.3 103.9C1213.9 99 1217 95.4 1222.4 95Z" stroke="#1a8088" stroke-width="1.2" fill="none" stroke-linejoin="round"/><path d="M1287 100.9H1306.9M1296.9 91V111" stroke="#1a8088" stroke-width="1.6" fill="none" /><path d="M1365.3 94.2H1381.8M1370.9 94.2V92.3A1 1 0 0 1 1371.9 91.3H1375.7A1 1 0 0 1 1376.7 92.3V94.2" stroke="#1a8088" stroke-width="1.4" fill="none" /><path d="M1366.9 94.2L1367.4 109A1.6 1.6 0 0 0 1369 110.5H1378.7A1.6 1.6 0 0 0 1380.3 109L1380.8 94.2" stroke="#1a8088" stroke-width="1.4" fill="none" /><path d="M1370.8 97.3V106.7M1373.6 97.3V106.7M1376.4 97.3V106.7" stroke="#1a8088" stroke-width="1.2" fill="none" /><path d="M2171 101.8L2176.7 106.8L2188.6 94.3" stroke="#5a6570" stroke-width="1.3" fill="none" /><path d="M2320.3 96.4H2309.3V106.4H2324.9V101.9" stroke="#1a8088" stroke-width="1.4" fill="none" /><path d="M2320.8 99.4L2327.3 94M2323.4 93.9H2327.5V97.6" stroke="#1a8088" stroke-width="1.4" fill="none" /><path d="M2369 91.5L2360.6 99.4M2360.5 94.3V99.6H2366.4" stroke="#1a8088" stroke-width="1.4" fill="none" /><path d="M2349.4 110.5L2357.4 102.9M2351.8 102.7H2357.5V107.7" stroke="#1a8088" stroke-width="1.4" fill="none" /><path d="M160.6 208.8H151.2V225.9H157.6" stroke="#1a8088" stroke-width="1.8" fill="none" /><path d="M153.3 212H156.8M153.3 214.1H156.8M153.3 216.2H156.4M153.7 212V223.8" stroke="#1a8088" stroke-width="1.2" fill="none" /><path d="M158.6 213.2H163.4V210.6L168 214.2L163.4 217.8V215.3H158.6Z" stroke="none" stroke-width="0" fill="#0f7f89" /><circle cx="162.9" cy="222.9" r="4.2" stroke="#0f7f89" stroke-width="2.1" fill="#fff"/><path d="M162.6 220.1V223.1H165.4" stroke="#0f7f89" stroke-width="1.2" fill="none" /><path d="M1562 334.7H1579.4V349.2H1562Z" stroke="#3a3a3a" stroke-width="1.3" fill="none" /><path d="M1562 337.4H1579.4" stroke="#3a3a3a" stroke-width="1.3" fill="none" /><path d="M1565.4 332.3V335.7M1576.4 332.3V335.7" stroke="#3a3a3a" stroke-width="1.7" fill="none" /><rect x="1568.50" y="339.45" width="1.1" height="1.1" fill="#555"/><rect x="1572.15" y="339.45" width="1.1" height="1.1" fill="#555"/><rect x="1575.80" y="339.45" width="1.1" height="1.1" fill="#555"/><rect x="1564.85" y="341.95" width="1.1" height="1.1" fill="#555"/><rect x="1568.50" y="341.95" width="1.1" height="1.1" fill="#555"/><rect x="1572.15" y="341.95" width="1.1" height="1.1" fill="#555"/><rect x="1575.80" y="341.95" width="1.1" height="1.1" fill="#555"/><rect x="1564.85" y="344.25" width="1.1" height="1.1" fill="#555"/><rect x="1568.50" y="344.25" width="1.1" height="1.1" fill="#555"/><rect x="1572.15" y="344.25" width="1.1" height="1.1" fill="#555"/><rect x="1575.80" y="344.25" width="1.1" height="1.1" fill="#555"/><rect x="1564.85" y="346.55" width="1.1" height="1.1" fill="#555"/><rect x="1568.50" y="346.55" width="1.1" height="1.1" fill="#555"/><rect x="1572.15" y="346.55" width="1.1" height="1.1" fill="#555"/><rect x="154.1" y="577.6" width="9.6" height="4.8" fill="#0f7f89"/><path d="M154.1 572.9H158.4V575.8M154.1 586.9H158.4V584.2" stroke="#1a8088" stroke-width="1.5" fill="none" /><path d="M164.50 574.70L173.30 574.70M165.79 571.59L172.01 577.81M168.90 570.30L168.90 579.10M172.01 571.59L165.79 577.81" stroke="#1a8088" stroke-width="1.5" fill="none" /><circle cx="168.9" cy="574.7" r="1.5" fill="#fff"/><path d="M310.1 577.6H315.9L318.8 580L315.9 582.3H310.1Z" stroke="none" stroke-width="0" fill="#0f7f89" /><path d="M310.1 572.9H314.3V575.8M310.1 586.9H314.3V584.2" stroke="#1a8088" stroke-width="1.5" fill="none" /><path d="M317.7 575L323.6 579.9L317.1 585.2" stroke="#0f7f89" stroke-width="2.6" fill="none" /><path d="M323.6 579.9L329 575.6M323.6 579.9L329.3 585.4" stroke="#0f7f89" stroke-width="1.9" fill="none" /><path d="M2271.9 523.3V534.8H2285.9V532.5" stroke="#1a8088" stroke-width="1.4" fill="none" /><path d="M2284.9 519.5L2290.3 524.6L2284.9 529.7V527.2C2281 527.2 2277.6 528 2275.3 530.5C2275.9 526 2279 522.4 2284.9 522Z" stroke="#1a8088" stroke-width="1.2" fill="none" stroke-linejoin="round"/><path d="M2322.8 520.6H2313.4V534.8H2329.7V527.4M2313.4 529.8H2320.8V534.8" stroke="#1a8088" stroke-width="1.4" fill="none" /><path d="M2323.2 527.2L2329.2 521.2M2325.4 520.6H2329.8V525" stroke="#1a8088" stroke-width="1.4" fill="none" /><path d="M2324.4 571.5L2330.2 577L2326.2 578.7L2324.5 582.3M2324.4 571.5L2321.7 577.5C2319.4 578.6 2317 578.9 2314.8 579L2322 586.2" stroke="#1a8088" stroke-width="1.3" fill="none" stroke-linejoin="round"/><path d="M2312.4 589.5L2318.7 583" stroke="#1a8088" stroke-width="1.3" fill="none" /><circle cx="2326.1" cy="585.7" r="3.5" stroke="#1a8088" stroke-width="1.3" fill="#fff"/><path d="M2323.7 583.3L2328.5 588.1" stroke="#1a8088" stroke-width="1.2" fill="none" /><path d="M213.3 701.8V690.2M209.7 693.9L213.3 690.2L216.9 693.9" stroke="#5a5a5a" stroke-width="1.2" fill="none" /><path d="M706.2 735.5L709.7 738.9L716.6 730.1" stroke="#fff" stroke-width="1.8" fill="none" /><path d="M706.2 910.5L709.7 913.9L716.6 905.1" stroke="#fff" stroke-width="1.8" fill="none" /><path d="M706.2 945.5L709.7 948.9L716.6 940.1" stroke="#fff" stroke-width="1.8" fill="none" /><path d="M706.2 980.5L709.7 983.9L716.6 975.1" stroke="#fff" stroke-width="1.8" fill="none" /><path d="M706.2 1190.5L709.7 1193.9L716.6 1185.1" stroke="#fff" stroke-width="1.8" fill="none" /><path d="M706.2 1225.5L709.7 1228.9L716.6 1220.1" stroke="#fff" stroke-width="1.8" fill="none" /><path d="M145 733.7H160.4M154.2 727.1L160.8 733.7L154.2 740.3" stroke="#333" stroke-width="1.2" fill="none" /><path d="M2329.8 731L2334.4 724L2339 731Z" stroke="none" stroke-width="0" fill="#8b8b8b" /><path d="M2366.9 256.7L2371.5 250L2376.1 256.7Z" stroke="none" stroke-width="0" fill="#8b8b8b" /><path d="M2366.9 1303.3L2371.4 1308.7L2375.9 1303.3Z" stroke="none" stroke-width="0" fill="#808080" /><path d="M57 679.3L46.4 688.9L57 698.4" stroke="#fff" stroke-width="1.7" fill="none" /><path d="M2459 679.3L2469.6 688.9L2459 698.4" stroke="#fff" stroke-width="1.7" fill="none" /></svg>
</div></div></body></html>
